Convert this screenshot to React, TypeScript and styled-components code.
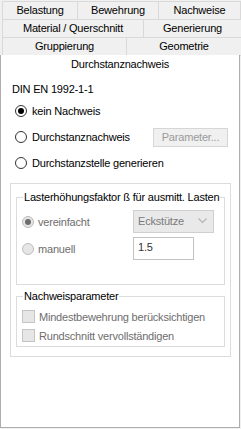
import React from "react";
import styled, { createGlobalStyle } from "styled-components";

const Global = createGlobalStyle`
  html, body { margin: 0; padding: 0; background: #f0f0f0; }
  * { box-sizing: border-box; }
  body { font-family: "Liberation Sans", Arial, sans-serif; font-size: 11px; letter-spacing: -0.2px; color: #000; }
`;

const Root = styled.div`
  width: 241px;
  height: 429px;
  background: #f0f0f0;
  padding-top: 1px;
  display: flex;
  flex-direction: column;
`;

const TabArea = styled.div`
  padding-left: 2px;
  display: flex;
  flex-direction: column;
`;

const TabRow = styled.div`
  display: flex;
  height: 18px;
`;

const Tab = styled.div<{ $w: number }>`
  flex: 0 0 ${(p) => p.$w}px;
  height: 19px;
  margin-right: -1px;
  border: 1px solid #d9d9d9;
  background: #f0f0f0;
  display: flex;
  align-items: center;
  justify-content: center;
  line-height: 13px;
  padding-bottom: 1px;
  white-space: nowrap;
`;

const Panel = styled.div`
  flex: 1;
  margin: 0 1px 1px 0;
  background: #fff;
  border: 1px solid #adadad;
  border-top: none;
  display: flex;
  flex-direction: column;
`;

const ActiveLabel = styled.div`
  height: 19px;
  display: flex;
  align-items: center;
  justify-content: center;
  padding-bottom: 1px;
`;

const Title = styled.div`
  margin: 8px 0 2px 11px;
  line-height: 14px;
`;

const RadioRow = styled.div<{ $disabled?: boolean }>`
  height: 26px;
  display: flex;
  align-items: center;
  padding-left: 14px;
  padding-right: 11px;
  white-space: nowrap;
  color: ${(p) => (p.$disabled ? "#6d6d6d" : "#000")};
`;

const RadioCircle = styled.span<{ $checked?: boolean; $disabled?: boolean }>`
  width: 12px;
  height: 12px;
  border-radius: 50%;
  border: 1px solid ${(p) => (p.$disabled ? "#bcbcbc" : "#333")};
  background: ${(p) => (p.$disabled ? "#e6e6e6" : "#fff")};
  display: flex;
  align-items: center;
  justify-content: center;
  margin-right: 5px;
  flex: 0 0 auto;
  &::after {
    content: "";
    display: ${(p) => (p.$checked ? "block" : "none")};
    width: 6px;
    height: 6px;
    border-radius: 50%;
    background: ${(p) => (p.$disabled ? "#6d6d6d" : "#000")};
  }
`;

const DisabledButton = styled.div`
  margin-left: auto;
  width: 75px;
  height: 19px;
  background: #f0f0f0;
  border: 1px solid #d6d6d6;
  color: #9a9a9a;
  display: flex;
  align-items: center;
  justify-content: center;
  padding-bottom: 1px;
`;

const OuterBox = styled.div`
  margin: 7px 8px 0 9px;
  border: 1px solid #dcdcdc;
  padding: 7px 5px 9px 5px;
  display: flex;
  flex-direction: column;
  gap: 5px;
`;

const Group = styled.fieldset<{ $padTop: number; $padBottom: number }>`
  margin: 0;
  border: 1px solid #dcdcdc;
  padding: ${(p) => p.$padTop}px 0 ${(p) => p.$padBottom}px 0;
  min-width: 0;
`;

const Legend = styled.legend`
  margin-left: 6px;
  padding: 0 1px;
  line-height: 13px;
  font-size: 11px;
  white-space: nowrap;
`;

const FactorGrid = styled.div`
  display: grid;
  grid-template-columns: 111px 81px;
  grid-auto-rows: 23px;
  row-gap: 4px;
  padding-left: 5px;
  align-items: center;
`;

const GridRadio = styled.div`
  display: flex;
  align-items: center;
  color: #6d6d6d;
  & > span { margin-right: 4px; }
`;

const Combo = styled.div`
  height: 23px;
  width: 81px;
  background: #e9e9e9;
  border: 1px solid #cfcfcf;
  color: #7a7a7a;
  display: flex;
  align-items: center;
  justify-content: space-between;
  padding: 0 6px 1px 4px;
`;

const TextBox = styled.div`
  height: 23px;
  width: 61px;
  background: #fff;
  border: 1px solid #c3c3c3;
  color: #333;
  padding: 3px 0 0 4px;
  line-height: 13px;
`;

const CheckRow = styled.div`
  height: 19px;
  display: flex;
  align-items: center;
  padding-left: 5px;
  color: #6d6d6d;
  white-space: nowrap;
`;

const CheckBox = styled.span`
  width: 13px;
  height: 13px;
  border: 1px solid #c4c4c4;
  background: #e6e6e6;
  margin-right: 4px;
  flex: 0 0 auto;
`;

const Chevron = () => (
  <svg width="9" height="6" viewBox="0 0 9 6">
    <path d="M0.5 0.5 L4.5 4.5 L8.5 0.5" fill="none" stroke="#b5b5b5" strokeWidth="1.2" />
  </svg>
);

export default function App() {
  return (
    <>
      <Global />
      <Root>
        <TabArea>
          <TabRow>
            <Tab $w={76}>Belastung</Tab>
            <Tab $w={82}>Bewehrung</Tab>
            <Tab $w={83}>Nachweise</Tab>
          </TabRow>
          <TabRow>
            <Tab $w={142}>Material / Querschnitt</Tab>
            <Tab $w={99}>Generierung</Tab>
          </TabRow>
          <TabRow>
            <Tab $w={125}>Gruppierung</Tab>
            <Tab $w={116}>Geometrie</Tab>
          </TabRow>
        </TabArea>
        <Panel>
          <ActiveLabel>Durchstanznachweis</ActiveLabel>
          <Title>DIN EN 1992-1-1</Title>
          <RadioRow>
            <RadioCircle $checked />
            kein Nachweis
          </RadioRow>
          <RadioRow>
            <RadioCircle />
            Durchstanznachweis
            <DisabledButton>Parameter...</DisabledButton>
          </RadioRow>
          <RadioRow>
            <RadioCircle />
            Durchstanzstelle generieren
          </RadioRow>
          <OuterBox>
            <Group $padTop={6} $padBottom={24}>
              <Legend>Lasterhöhungsfaktor ß für ausmitt. Lasten</Legend>
              <FactorGrid>
                <GridRadio>
                  <RadioCircle $checked $disabled />
                  vereinfacht
                </GridRadio>
                <Combo>
                  Eckstütze
                  <Chevron />
                </Combo>
                <GridRadio>
                  <RadioCircle $disabled />
                  manuell
                </GridRadio>
                <TextBox>1.5</TextBox>
              </FactorGrid>
            </Group>
            <Group $padTop={4} $padBottom={1}>
              <Legend>Nachweisparameter</Legend>
              <CheckRow>
                <CheckBox />
                Mindestbewehrung berücksichtigen
              </CheckRow>
              <CheckRow>
                <CheckBox />
                Rundschnitt vervollständigen
              </CheckRow>
            </Group>
          </OuterBox>
        </Panel>
      </Root>
    </>
  );
}
